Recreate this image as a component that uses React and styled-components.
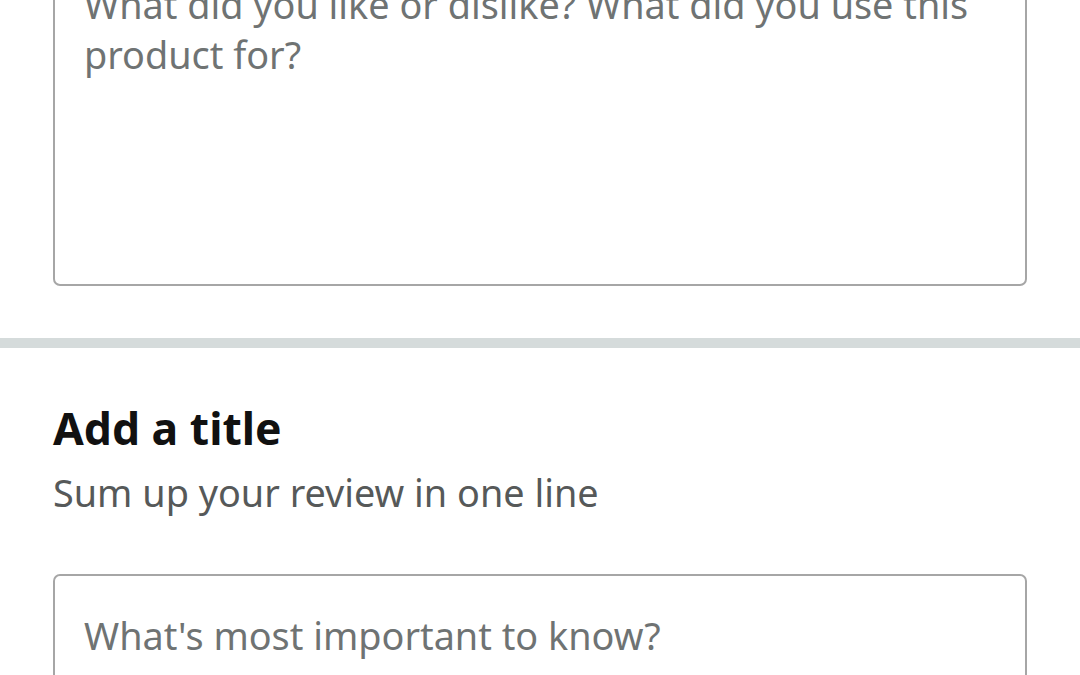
import styled, { createGlobalStyle } from "styled-components";

const GlobalStyle = createGlobalStyle`
  html, body {
    margin: 0;
    padding: 0;
    background: #ffffff;
    overflow: hidden;
  }
  body {
    font-family: "Noto Sans", "Liberation Sans", sans-serif;
  }
`;

const Page = styled.div`
  width: 1080px;
  height: 675px;
  overflow: hidden;
  background: #ffffff;
`;

const Section = styled.div`
  padding: ${(p) => p.$pad};
  margin-top: ${(p) => p.$shift || 0}px;
`;

const Box = styled.textarea`
  display: block;
  box-sizing: border-box;
  width: 100%;
  height: ${(p) => p.$height}px;
  margin: 0;
  padding: ${(p) => p.$pad};
  border: 2px solid #a6a6a6;
  border-radius: 7px;
  font-family: inherit;
  font-size: 37.8px;
  line-height: 50px;
  color: #111111;
  resize: none;
  outline: none;
  background: #ffffff;

  &::placeholder {
    color: #6f7373;
    opacity: 1;
  }
`;

const Divider = styled.div`
  height: 10px;
  background: #d5dbdb;
`;

const Title = styled.h2`
  margin: 0;
  font-size: 44.5px;
  font-weight: 700;
  line-height: 52px;
  color: #111111;
`;

const Hint = styled.p`
  margin: 17px 0 0;
  font-size: 37.8px;
  line-height: 44px;
  color: #565959;
`;

export default function App() {
  return (
    <Page>
      <GlobalStyle />
      <Section $pad="0 53px 52px" $shift={-60}>
        <Box
          $height={346}
          $pad="38px 29px"
          placeholder="What did you like or dislike? What did you use this product for?"
        />
      </Section>
      <Divider />
      <Section $pad="54px 53px 0">
        <Title>Add a title</Title>
        <Hint>Sum up your review in one line</Hint>
      </Section>
      <Section $pad="59px 53px 0">
        <Box as="input" $height={130} $pad="0 29px 7px" placeholder="What's most important to know?" />
      </Section>
    </Page>
  );
}
